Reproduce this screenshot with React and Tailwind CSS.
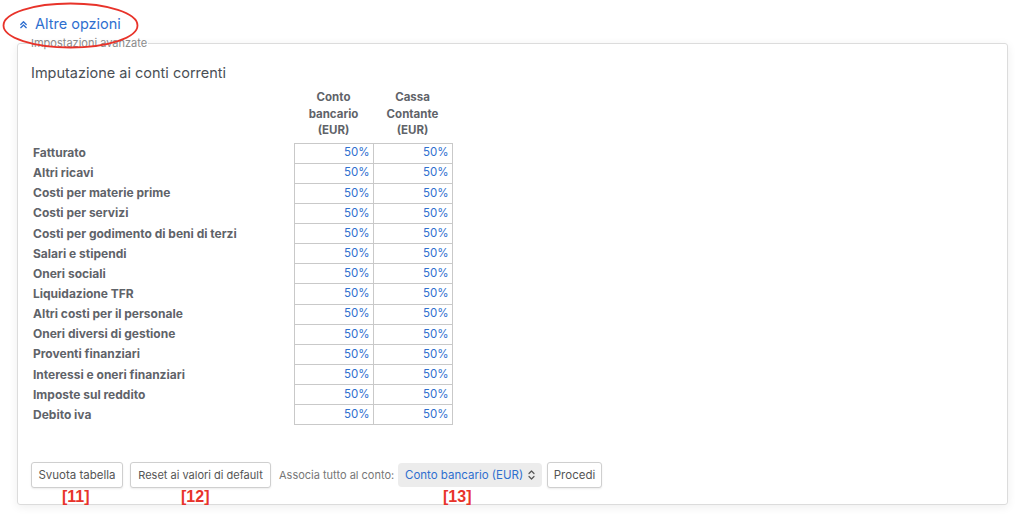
import React from "react";

const rows = [
  "Fatturato",
  "Altri ricavi",
  "Costi per materie prime",
  "Costi per servizi",
  "Costi per godimento di beni di terzi",
  "Salari e stipendi",
  "Oneri sociali",
  "Liquidazione TFR",
  "Altri costi per il personale",
  "Oneri diversi di gestione",
  "Proventi finanziari",
  "Interessi e oneri finanziari",
  "Imposte sul reddito",
  "Debito iva",
];

function ChevronsUp() {
  return (
    <svg width="9" height="9" viewBox="0 0 10 10" fill="none" stroke="#2f6fcf" strokeWidth="1.5" strokeLinecap="round" strokeLinejoin="round">
      <path d="M2 5 L5 2 L8 5" />
      <path d="M2 8.5 L5 5.5 L8 8.5" />
    </svg>
  );
}

const red = { fontFamily: "'Liberation Sans', Arial, sans-serif" };

export default function App() {
  return (
    <div className="relative w-[1024px] h-[527px] bg-white overflow-hidden" style={{ fontFamily: "Inter, 'Noto Sans', sans-serif" }}>
      {/* annotation ellipse */}
      <svg className="absolute left-0 top-0 pointer-events-none" width="150" height="55">
        <ellipse cx="70.5" cy="25.5" rx="67" ry="22" fill="none" stroke="#e8332a" strokeWidth="1.8" />
      </svg>

      <div className="px-[17px] pt-[14px]">
        <div className="flex items-center gap-[7px] h-[20px] pl-[2px] text-[14.5px] text-[#2f6fcf] leading-none">
          <ChevronsUp />
          <span>Altre opzioni</span>
        </div>

        <fieldset className="mt-[4px] w-[991px] h-[467px] border border-[#dcdcdc] rounded-[3px] shadow-[0_2px_10px_rgba(0,0,0,0.07)] px-[13px] pb-[16px]">
          <legend className="-ml-[1px] px-[1px] text-[11px] text-[#8a8a8a] leading-none">Impostazioni avanzate</legend>

          <div className="mt-[14px] text-[14.5px] text-[#4a4f55] leading-[20px]">Imputazione ai conti correnti</div>

          <table className="mt-[6px] border-collapse text-[11.5px]">
            <thead>
              <tr>
                <th className="w-[263px]"></th>
                <th className="w-[79px] font-bold text-[#5f6369] leading-[16.5px] text-center pb-[4px] align-bottom">Conto<br />bancario<br />(EUR)</th>
                <th className="w-[79px] font-bold text-[#5f6369] leading-[16.5px] text-center pb-[4px] align-bottom">Cassa<br />Contante<br />(EUR)</th>
              </tr>
            </thead>
            <tbody>
              {rows.map((r) => (
                <tr key={r} className="h-[20.15px]">
                  <td className="pl-[2px] font-bold text-[12px] text-[#5f6369] leading-none">{r}</td>
                  <td className="border border-[#c9c9c9] text-right pr-[3px] text-[#2f6fcf] leading-none">50%</td>
                  <td className="border border-[#c9c9c9] text-right pr-[3px] text-[#2f6fcf] leading-none">50%</td>
                </tr>
              ))}
            </tbody>
          </table>

          <div className="mt-[37px] flex items-center text-[11.5px]">
            <div className="relative">
              <button className="h-[26px] w-[92px] border border-[#cfcfcf] rounded-[3px] text-[#555] bg-white shadow-[0_1px_2px_rgba(0,0,0,0.08)] whitespace-nowrap">Svuota tabella</button>
              <span className="absolute left-[31px] top-[23px] text-[16px] font-bold text-[#e8332a]" style={red}>[11]</span>
            </div>
            <div className="relative ml-[7px]">
              <button className="h-[26px] w-[141px] border border-[#cfcfcf] rounded-[3px] text-[#555] text-[11px] bg-white shadow-[0_1px_2px_rgba(0,0,0,0.08)] whitespace-nowrap">Reset ai valori di default</button>
              <span className="absolute left-[51px] top-[23px] text-[16px] font-bold text-[#e8332a]" style={red}>[12]</span>
            </div>
            <span className="ml-[8px] w-[116px] text-[11px] whitespace-nowrap text-[#777]">Associa tutto al conto:</span>
            <div className="relative ml-[3px]">
              <div className="h-[24px] w-[144px] flex items-center justify-between pl-[7px] pr-[7px] rounded-[4px] bg-[#ececec] text-[#2f6fcf]">
                <span>Conto bancario (EUR)</span>
                <svg width="7" height="10" viewBox="0 0 7 10" fill="none" stroke="#555" strokeWidth="1.2" strokeLinecap="round" strokeLinejoin="round">
                  <path d="M1 3.5 L3.5 1 L6 3.5" />
                  <path d="M1 6.5 L3.5 9 L6 6.5" />
                </svg>
              </div>
              <span className="absolute left-[45px] top-[22px] text-[16px] font-bold text-[#e8332a]" style={red}>[13]</span>
            </div>
            <button className="ml-[5px] h-[26px] w-[55px] border border-[#cfcfcf] rounded-[3px] text-[#555] bg-white shadow-[0_1px_2px_rgba(0,0,0,0.08)]">Procedi</button>
          </div>
        </fieldset>
      </div>
    </div>
  );
}
